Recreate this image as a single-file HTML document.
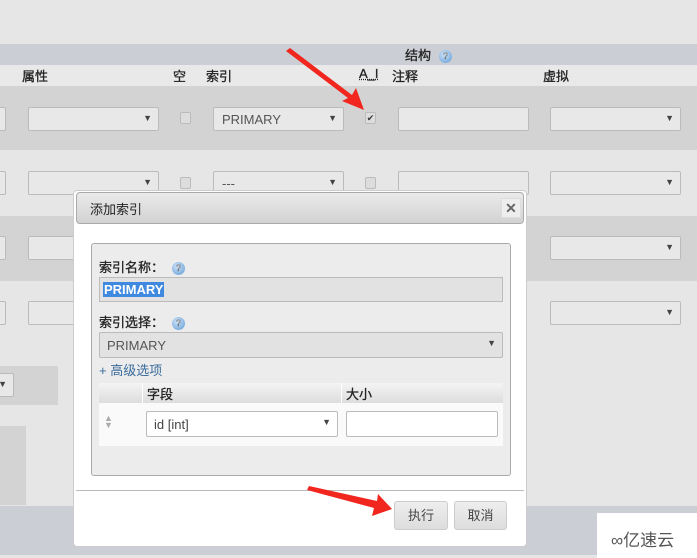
<!DOCTYPE html>
<html><head><meta charset="utf-8"><style>
*{box-sizing:border-box;margin:0;padding:0}
body{width:697px;height:558px;overflow:hidden;background:#e6e6e6;font-family:"Liberation Sans","Noto Sans CJK SC",sans-serif;font-size:13px;color:#333;position:relative}
.a{position:absolute}
.sel{position:absolute;height:24px;background:#e8e8e8;border:1px solid #bbb;border-radius:2px;font-size:13px;color:#555;padding:4px 8px}
.sel:after{content:"▼";position:absolute;right:6px;top:5px;font-size:9px;color:#444}
.inp{position:absolute;height:24px;background:#e8e8e8;border:1px solid #bbb;border-radius:2px}
.cb{position:absolute;width:11px;height:12px;border:1px solid #bbb;background:#ddd;border-radius:2px}
.q{display:inline-block;width:13px;height:13px;border-radius:50%;background:radial-gradient(circle at 40% 35%,#cfe3f7,#5d9ad6);color:#fff;font-size:9px;text-align:center;line-height:13px;vertical-align:middle;margin-left:8px}
.hd{font-weight:normal;font-size:13px;color:#222;-webkit-text-stroke:0.3px #222}
.btn{position:absolute;height:29px;background:linear-gradient(#eee,#ddd);border:1px solid #ccc;border-radius:3px;font-size:13px;color:#444;text-align:center;line-height:27px}
</style></head><body>
<div class="a" style="left:0;top:44px;width:697px;height:21px;background:#cbced4"></div>
<div class="a hd" style="left:405px;top:45px">结构<span class="q">?</span></div>
<div class="a" style="left:0;top:65px;width:697px;height:21px;background:#e9e9e9"></div>
<div class="a hd" style="left:22px;top:66px">属性</div>
<div class="a hd" style="left:173px;top:66px">空</div>
<div class="a hd" style="left:206px;top:66px">索引</div>
<div class="a hd" style="left:359px;top:66px;text-decoration:underline dotted">A_I</div>
<div class="a hd" style="left:392px;top:66px">注释</div>
<div class="a hd" style="left:543px;top:66px">虚拟</div>
<div class="a" style="left:0;top:86px;width:697px;height:64px;background:#d3d3d3"></div>
<div class="a" style="left:0;top:216px;width:697px;height:65px;background:#d3d3d3"></div>
<div class="inp" style="left:-4px;top:107px;width:10px"></div>
<div class="sel" style="left:28px;top:107px;width:131px"></div>
<div class="cb" style="left:180px;top:112px"></div>
<div class="sel" style="left:213px;top:107px;width:131px">PRIMARY</div>
<div class="cb" style="left:365px;top:112px;font-size:9px;line-height:10px;text-align:center">✔</div>
<div class="inp" style="left:398px;top:107px;width:131px"></div>
<div class="sel" style="left:550px;top:107px;width:131px"></div>
<div class="inp" style="left:-4px;top:171px;width:10px"></div>
<div class="sel" style="left:28px;top:171px;width:131px"></div>
<div class="cb" style="left:180px;top:177px"></div>
<div class="sel" style="left:213px;top:171px;width:131px">---</div>
<div class="cb" style="left:365px;top:177px"></div>
<div class="inp" style="left:398px;top:171px;width:131px"></div>
<div class="sel" style="left:550px;top:171px;width:131px"></div>
<div class="inp" style="left:-4px;top:236px;width:10px"></div>
<div class="inp" style="left:28px;top:236px;width:60px"></div>
<div class="sel" style="left:550px;top:236px;width:131px"></div>
<div class="inp" style="left:-4px;top:301px;width:10px"></div>
<div class="inp" style="left:28px;top:301px;width:60px"></div>
<div class="sel" style="left:550px;top:301px;width:131px"></div>
<div class="a" style="left:0;top:366px;width:58px;height:39px;background:#d3d3d3"></div>
<div class="sel" style="left:-10px;top:373px;width:24px"></div>
<div class="a" style="left:0;top:426px;width:26px;height:79px;background:#d3d3d3"></div>
<div class="a" style="left:0;top:506px;width:697px;height:49px;background:#cbced4"></div>
<div class="a" style="left:73px;top:190px;width:454px;height:357px;background:#fff;border:1px solid #ccc;border-radius:4px"></div>
<div class="a" style="left:76px;top:192px;width:448px;height:32px;background:linear-gradient(#eaeaea,#d2d2d2);border:1px solid #aaa;border-radius:4px"></div>
<div class="a" style="left:90px;top:199px;color:#222">添加索引</div>
<div class="a" style="left:501px;top:198px;width:20px;height:20px;background:#eee;border:1px solid #ddd;color:#666;text-align:center;font-weight:bold;font-size:14px;line-height:18px">✕</div>
<div class="a" style="left:91px;top:243px;width:420px;height:233px;background:#ececec;border:1px solid #aaa;border-radius:3px"></div>
<div class="a hd" style="left:99px;top:257px">索引名称：<span class="q">?</span></div>
<div class="a" style="left:99px;top:277px;width:404px;height:25px;background:#e2e2e2;border:1px solid #bbb"></div>
<div class="a" style="left:103px;top:282px;background:#3f8ae0;color:#fff;font-weight:bold;font-size:13px;padding:0 1px;line-height:15px">PRIMARY</div>
<div class="a hd" style="left:99px;top:312px">索引选择：<span class="q">?</span></div>
<div class="sel" style="left:99px;top:332px;width:404px;height:26px;background:#e2e2e2;padding:5px 7px">PRIMARY</div>
<div class="a" style="left:99px;top:360px;color:#3a6c9c">+ 高级选项</div>
<div class="a" style="left:99px;top:383px;width:404px;height:20px;background:linear-gradient(#f4f4f4,#ddd)"></div>
<div class="a" style="left:142px;top:383px;width:1px;height:20px;background:#fff"></div>
<div class="a" style="left:341px;top:383px;width:1px;height:20px;background:#fff"></div>
<div class="a hd" style="left:147px;top:384px">字段</div>
<div class="a hd" style="left:346px;top:384px">大小</div>
<div class="a" style="left:99px;top:403px;width:404px;height:43px;background:#fafafa"></div>
<div class="a" style="left:104px;top:415px;font-size:9px;color:#aaa;line-height:7px">▲<br>▼</div>
<div class="sel" style="left:146px;top:411px;width:192px;height:26px;background:#fff;padding:5px 7px;color:#444">id [int]</div>
<div class="inp" style="left:346px;top:411px;width:152px;height:26px;background:#fff"></div>
<div class="a" style="left:76px;top:490px;width:448px;height:1px;background:#bbb"></div>
<div class="btn" style="left:394px;top:501px;width:54px">执行</div>
<div class="btn" style="left:454px;top:501px;width:53px">取消</div>
<svg class="a" style="left:0;top:0" width="697" height="558">
<polygon points="286,51 290,48 352,95 356,88 364,110 342,101 348,98" fill="#f0261f"/>
<polygon points="307,490 309,486 377,501 378,494 392,509 372,516 374,508" fill="#f0261f"/>
</svg>
<div class="a" style="left:597px;top:513px;width:100px;height:45px;background:#fff"></div>
<div class="a" style="left:611px;top:526px;font-size:17px;color:#555">∞亿速云</div>
</body></html>
